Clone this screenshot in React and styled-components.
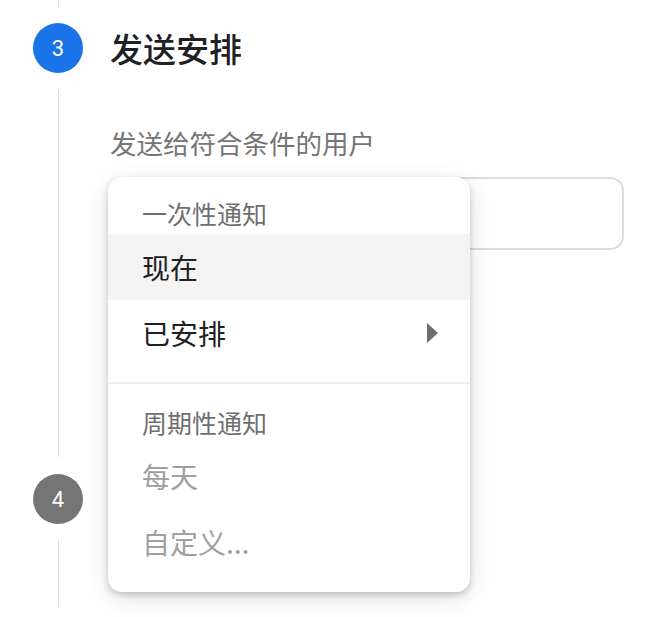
import React from "react";
import styled, { createGlobalStyle } from "styled-components";

const GlobalStyle = createGlobalStyle`
  html, body {
    margin: 0;
    padding: 0;
    background: #ffffff;
  }
  body {
    font-family: "Noto Sans CJK SC", "Noto Sans", Roboto, sans-serif;
    color: #202124;
  }
`;

const Page = styled.div`
  width: 670px;
  height: 617px;
  padding-left: 33px;
  box-sizing: border-box;
  overflow: hidden;
`;

const Rail = styled.div`
  width: 50px;
  display: flex;
  flex-direction: column;
  align-items: center;
  flex-shrink: 0;
`;

const Line = styled.div`
  width: 1px;
  background: #dadce0;
  flex: 1;
  margin: ${(p) => p.$margin || "17px 0"};
`;

const TopConnector = styled.div`
  display: flex;
  height: 23px;
`;

const StepHeader = styled.div`
  display: flex;
  align-items: center;
  gap: 27px;
  height: 50px;
`;

const Circle = styled.div`
  width: 50px;
  height: 50px;
  border-radius: 50%;
  background: ${(p) => (p.$active ? "#1a73e8" : "#757575")};
  color: #ffffff;
  display: flex;
  align-items: center;
  justify-content: center;
  font-family: Roboto, "Liberation Sans", sans-serif;
  font-size: 22px;
  flex-shrink: 0;
`;

const Title = styled.h2`
  margin: 0;
  font-size: 33px;
  font-weight: 500;
  line-height: 40px;
  color: #202124;
`;

const StepBody = styled.div`
  display: flex;
  gap: 27px;
  height: ${(p) => p.$height}px;
`;

const Content = styled.div`
  flex: 1;
  padding-top: ${(p) => p.$top || 0}px;
  padding-right: 46px;
`;

const Label = styled.div`
  font-size: 26.5px;
  line-height: 36px;
  color: #757575;
  margin-bottom: 16px;
`;

const FieldWrap = styled.div`
  position: relative;
`;

const Field = styled.div`
  height: 73px;
  margin-left: -2px;
  box-sizing: border-box;
  border: 2px solid #dadce0;
  border-radius: 14px;
  background: #ffffff;
`;

const Menu = styled.div`
  position: absolute;
  top: 0;
  left: -2px;
  width: 362px;
  box-sizing: border-box;
  background: #ffffff;
  border-radius: 14px;
  box-shadow: 0 3px 6px rgba(0, 0, 0, 0.18), 0 6px 24px rgba(0, 0, 0, 0.12);
  padding-bottom: 17px;
  z-index: 2;
`;

const Group = styled.div`
  padding-bottom: ${(p) => p.$pad || 0}px;
  border-bottom: ${(p) => (p.$divider ? "2px solid #ececec" : "none")};
`;

const GroupHeader = styled.div`
  padding: ${(p) => p.$top || 19}px 34px 4px;
  font-size: 25px;
  line-height: 34px;
  color: #6f6f6f;
`;

const Item = styled.div`
  display: flex;
  align-items: center;
  justify-content: space-between;
  height: 66px;
  padding: 0 32px 0 34px;
  font-size: 28px;
  color: ${(p) => (p.$disabled ? "#a0a0a0" : "#202124")};
  background: ${(p) => (p.$hover ? "#f3f3f3" : "transparent")};
`;

const Arrow = () => (
  <svg width="11" height="20" viewBox="0 0 11 20">
    <polygon points="0,0 11,10 0,20" fill="#6f6f6f" />
  </svg>
);

export default function App() {
  return (
    <Page>
      <GlobalStyle />
      <TopConnector>
        <Rail>
          <Line $margin="0 0 16px" />
        </Rail>
      </TopConnector>

      <StepHeader>
        <Circle $active>3</Circle>
        <Title>发送安排</Title>
      </StepHeader>
      <StepBody $height={401}>
        <Rail>
          <Line />
        </Rail>
        <Content $top={52}>
          <Label>发送给符合条件的用户</Label>
          <FieldWrap>
            <Field />
            <Menu>
              <Group $pad={16} $divider>
                <GroupHeader>一次性通知</GroupHeader>
                <Item $hover>现在</Item>
                <Item>
                  已安排
                  <Arrow />
                </Item>
              </Group>
              <Group>
                <GroupHeader $top={21}>周期性通知</GroupHeader>
                <Item $disabled>每天</Item>
                <Item $disabled>自定义...</Item>
              </Group>
            </Menu>
          </FieldWrap>
        </Content>
      </StepBody>

      <StepHeader>
        <Circle>4</Circle>
      </StepHeader>
      <StepBody $height={100}>
        <Rail>
          <Line $margin="16px 0 17px" />
        </Rail>
      </StepBody>
    </Page>
  );
}
